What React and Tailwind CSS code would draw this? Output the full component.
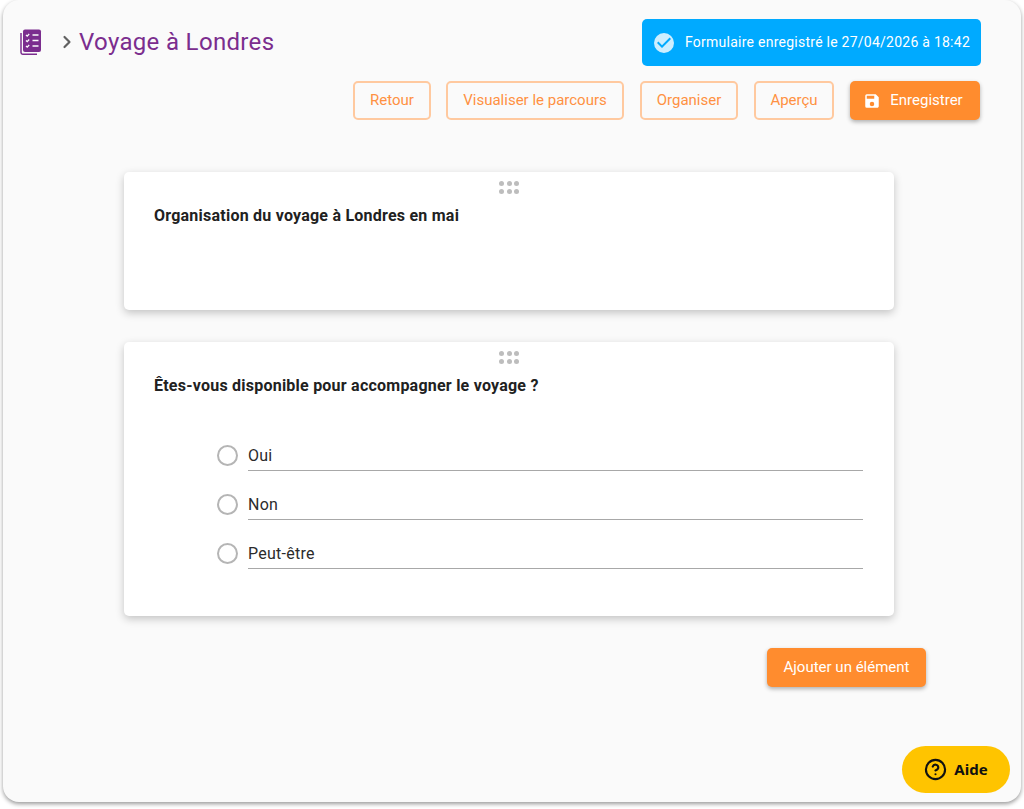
import { ChevronRight, CircleHelp } from "lucide-react";

const OUTLINE_BUTTONS = [
  { label: "Retour", width: "w-[78px] mr-[-1px]" },
  { label: "Visualiser le parcours", width: "w-[178px]" },
  { label: "Organiser", width: "w-[98px]" },
  { label: "Aperçu", width: "w-[80px]" },
];

const OPTIONS = ["Oui", "Non", "Peut-être"];

function FormIcon() {
  return (
    <svg width="24" height="26" viewBox="0 0 24 26" className="text-[#7b2d8e]">
      <path fill="none" stroke="currentColor" strokeWidth="1.500" d="M2 4v19.500c0 1 .6 1.700 1.700 1.700H18" />
      <rect x="4" y="0.500" width="18" height="22.500" rx="2" fill="currentColor" />
      <path fill="none" stroke="#fafafa" strokeWidth="1.300" d="M13.500 6h6M13.500 11.500h6M13.500 17h6" />
      <path fill="none" stroke="#fafafa" strokeWidth="1.300" d="M7 6l1.200 1.100 2-2.100M7 11.500l1.200 1.100 2-2.100M7 17l1.200 1.100 2-2.100" />
    </svg>
  );
}

function SaveIcon() {
  return (
    <svg width="18" height="18" viewBox="0 0 24 24" fill="currentColor">
      <path d="M17 3H5a2 2 0 0 0-2 2v14a2 2 0 0 0 2 2h14c1.100 0 2-.9 2-2V7l-4-4zm-5 16a3 3 0 1 1 0-6 3 3 0 0 1 0 6zm3-10H5V5h10v4z" />
    </svg>
  );
}

function CheckCircleIcon() {
  return (
    <svg width="24" height="24" viewBox="0 0 24 24">
      <path fill="#cdeeff" d="M12 2a10 10 0 1 0 0 20 10 10 0 0 0 0-20zm-2 15-5-5 1.410-1.410L10 14.170l7.590-7.590L19 8l-9 9z" />
    </svg>
  );
}

function DragHandle() {
  return (
    <div className="flex justify-center pt-[9px]">
      <div className="grid grid-cols-3 gap-x-[2.5px] gap-y-[3px]">
        {[0, 1, 2, 3, 4, 5].map((dot) => (
          <span key={dot} className="h-[5px] w-[5px] rounded-full bg-[#bdbdbd]" />
        ))}
      </div>
    </div>
  );
}

function Card({ title, height, children }) {
  return (
    <section className={`w-[770px] rounded-[5px] bg-white shadow-[0_3px_8px_rgba(0,0,0,0.22)] ${height}`}>
      <DragHandle />
      <h2 className="mt-[10px] pl-[30px] text-[16px] leading-[24px] font-bold tracking-[0.23px] text-[#212121]">{title}</h2>
      {children}
    </section>
  );
}

function RadioRow({ label }) {
  return (
    <div className="flex h-[49px] items-start">
      <span className="mt-[10px] h-[21px] w-[21px] shrink-0 rounded-full border-2 border-[#b5b5b5]" />
      <div className="ml-[10px] h-[36px] flex-1 border-b border-[#a8a8a8] pt-[9px] text-[16px] leading-[24px] tracking-[0.25px] text-[#2b2b2b]">
        {label}
      </div>
    </div>
  );
}

export default function App() {
  return (
    <div className="relative h-[809px] w-[1024px] bg-white font-['Roboto',sans-serif]">
      <div className="relative mx-[3px] h-[802px] w-[1018px] overflow-hidden rounded-[16px] bg-[#fafafa] shadow-[0_2px_4px_rgba(0,0,0,0.4)]">
        <header className="flex items-start justify-between pt-[19px] pr-[40px] pl-[16px]">
          <div className="mt-[10px] flex items-center">
            <FormIcon />
            <ChevronRight size={20} strokeWidth={2.6} className="ml-[14px] text-[#616161]" />
            <h1 className="ml-[2px] text-[24px] leading-[26px] tracking-[0.33px] text-[#7b2d8e]">Voyage à Londres</h1>
          </div>
          <div className="flex h-[47px] w-[339px] items-center rounded-[5px] bg-[#00aaff] pl-[10px] text-[14px] tracking-[0.25px] text-white">
            <CheckCircleIcon />
            <span className="ml-[9px]">Formulaire enregistré le 27/04/2026 à 18:42</span>
          </div>
        </header>

        <div className="mt-[15px] flex justify-end gap-[16px] pr-[41px]">
          {OUTLINE_BUTTONS.map((button) => (
            <button
              key={button.label}
              type="button"
              className={`h-[39px] rounded-[5px] border-2 border-[#ffc99f] text-[15px] text-[#ff9142] ${button.width}`}
            >
              {button.label}
            </button>
          ))}
          <button
            type="button"
            className="flex h-[39px] w-[130px] items-center justify-center gap-[9px] rounded-[5px] bg-[#ff8c2e] pr-[4px] text-[15px] text-white shadow-[0_2px_4px_rgba(0,0,0,0.3)]"
          >
            <SaveIcon />
            Enregistrer
          </button>
        </div>

        <main className="mt-[52px] ml-[121px] flex w-[770px] flex-col gap-[32px]">
          <Card title="Organisation du voyage à Londres en mai" height="h-[138px]" />
          <Card title="Êtes-vous disponible pour accompagner le voyage ?" height="h-[274px]">
            <div className="mt-[37px] ml-[93px] mr-[31px]">
              {OPTIONS.map((option) => (
                <RadioRow key={option} label={option} />
              ))}
            </div>
          </Card>
        </main>

        <div className="mt-[32px] flex justify-end pr-[95px]">
          <button
            type="button"
            className="h-[39px] w-[159px] rounded-[5px] bg-[#ff8c2e] text-[15px] text-white shadow-[0_2px_4px_rgba(0,0,0,0.3)]"
          >
            Ajouter un élément
          </button>
        </div>

        <button
          type="button"
          className="absolute top-[746px] left-[899px] flex h-[47px] w-[108px] items-center justify-center gap-[7px] rounded-full bg-[#ffc400] font-['Noto_Sans',sans-serif] text-[15px] font-bold text-[#111]"
        >
          <CircleHelp size={23} strokeWidth={2.2} />
          Aide
        </button>
      </div>
    </div>
  );
}
